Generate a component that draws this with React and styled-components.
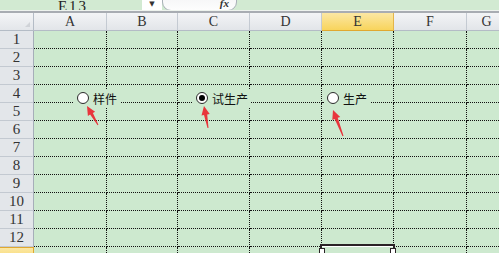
import React from 'react';
import styled, { createGlobalStyle, css } from 'styled-components';

const GlobalStyle = createGlobalStyle`
  html, body {
    margin: 0;
    padding: 0;
    background: #cde9cf;
    overflow: hidden;
  }
  * { box-sizing: border-box; }
`;

const COLS = ['A', 'B', 'C', 'D', 'E', 'F', 'G'];
const COL_WIDTHS = [73, 71, 72, 72, 72, 73, 40];
const ROW_COUNT = 13;
const SELECTED_COL = 'E';
const SELECTED_ROW = 13;

const StyledPage = styled.div`
  width: 499px;
  height: 253px;
  overflow: hidden;
  display: flex;
  flex-direction: column;
  font-family: "Liberation Serif", "DejaVu Serif", serif;
`;

const StyledFormulaBar = styled.div`
  height: 10px;
  flex-shrink: 0;
  display: flex;
  align-items: flex-end;
  background: #d2ead2;
  overflow: hidden;
`;

const StyledNameBox = styled.div`
  width: 142px;
  height: 20px;
  flex-shrink: 0;
  display: flex;
  align-items: center;
  justify-content: center;
  padding-left: 4px;
  margin-bottom: -6px;
  font-family: "Liberation Serif", serif;
  font-size: 15px;
  letter-spacing: 2px;
  color: #222;
`;

const StyledDropdown = styled.div`
  width: 20px;
  height: 10px;
  flex-shrink: 0;
  background: #fff;
  display: flex;
  align-items: center;
  justify-content: center;
  font-family: "DejaVu Sans", sans-serif;
  font-size: 7px;
  color: #333;
  padding-bottom: 3px;
`;

const StyledFxBox = styled.div`
  width: 75px;
  height: 20px;
  flex-shrink: 0;
  margin-bottom: -1px;
  border: 1px solid #a9b0b8;
  border-radius: 9px;
  background: linear-gradient(#f2f3f4, #fdfdfd);
  display: flex;
  align-items: flex-end;
  justify-content: flex-end;
  padding: 0 7px 1px 0;
  font-family: "Liberation Serif", serif;
  font-style: italic;
  font-weight: bold;
  font-size: 11px;
  color: #333;
`;

const StyledSeparator = styled.div`
  height: 3px;
  flex-shrink: 0;
  background: #eef3ee;
  border-bottom: 2px solid #a8acb2;
`;

const StyledSheet = styled.div`
  position: relative;
  flex: 1;
  min-height: 0;
  display: grid;
  grid-template-columns: 34px ${COL_WIDTHS.map((w) => `${w}px`).join(' ')};
  grid-auto-rows: 18px;
  align-content: start;
`;

const headerBase = css`
  display: flex;
  align-items: center;
  justify-content: center;
  font-size: 14px;
  color: #333;
`;

const StyledCorner = styled.div`
  position: relative;
  background: linear-gradient(#f4f5f7, #e3e6ea);
  border-right: 1px solid #b4bcc6;
  border-bottom: 1px solid #b4bcc6;

  &::after {
    content: '';
    position: absolute;
    right: 3px;
    bottom: 3px;
    border-left: 5px solid transparent;
    border-bottom: 5px solid #d0d3d8;
  }
`;

const StyledColHeader = styled.div`
  ${headerBase};
  background: ${({ $active }) =>
    $active ? 'linear-gradient(#fbe7a4, #f8d45c)' : 'linear-gradient(#f3f4f6, #e2e5e9)'};
  border-right: 1px solid ${({ $active }) => ($active ? '#e3b54a' : '#c4cad2')};
  border-bottom: 1px solid ${({ $active }) => ($active ? '#e0a830' : '#b4bcc6')};
`;

const StyledRowHeader = styled.div`
  ${headerBase};
  font-size: 15px;
  background: ${({ $active }) => ($active ? 'linear-gradient(#fbe7a4, #f8d45c)' : '#e3e6ea')};
  border-right: 1px solid ${({ $active }) => ($active ? '#e0a830' : '#a6aeb9')};
  border-bottom: 1px solid ${({ $active }) => ($active ? '#e0a830' : '#c3c9d1')};
  border-top: ${({ $active }) => ($active ? '1px solid #e0a830' : 'none')};
`;

const StyledCell = styled.div`
  position: relative;
  border-right: 1px dotted #111;
  border-bottom: 1px dotted #111;
`;

const StyledSelection = styled.div`
  position: absolute;
  left: -2px;
  right: -2px;
  top: -3px;
  height: 8px;
  border: 2px solid #2a2226;
  border-bottom: none;
  box-shadow: inset 0 1px 0 #fff;

  &::before,
  &::after {
    content: '';
    position: absolute;
    top: 2px;
    width: 4px;
    height: 5px;
    border: 1px solid #2a2226;
    background: #fff;
  }
  &::before { left: -3px; }
  &::after { right: -3px; }
`;

const StyledOption = styled.label`
  position: absolute;
  display: flex;
  align-items: center;
  gap: 4px;
  height: 18px;
  padding: 0 3px;
  background: #cde9cf;
  font-family: "Noto Sans CJK SC", sans-serif;
  font-size: 12px;
  color: #111;
`;

const StyledRadio = styled.span`
  width: 12px;
  height: 12px;
  flex-shrink: 0;
  border-radius: 50%;
  border: 1px solid #2b2b2b;
  background: #fff;
  display: flex;
  align-items: center;
  justify-content: center;

  &::after {
    content: '';
    width: 6px;
    height: 6px;
    border-radius: 50%;
    background: ${({ $checked }) => ($checked ? '#000' : 'transparent')};
  }
`;

const StyledArrows = styled.svg`
  position: absolute;
  left: 0;
  top: -13px;
  width: 499px;
  height: 253px;
  pointer-events: none;
`;

const options = [
  { label: '样件', x: 74, checked: false },
  { label: '试生产', x: 193, checked: true },
  { label: '生产', x: 324, checked: false },
];

const arrows = [
  { tail: [98, 125], head: [87, 106] },
  { tail: [208, 128], head: [204, 106] },
  { tail: [343, 136], head: [333, 110] },
];

const arrowPoints = ({ tail, head }) => {
  const [tx, ty] = tail;
  const [hx, hy] = head;
  const len = Math.hypot(hx - tx, hy - ty);
  const dx = (hx - tx) / len;
  const dy = (hy - ty) / len;
  const nx = -dy;
  const ny = dx;
  const neckX = hx - dx * 9;
  const neckY = hy - dy * 9;
  const p = (x, y) => `${x.toFixed(1)},${y.toFixed(1)}`;
  return [
    p(tx + nx * 0.5, ty + ny * 0.5),
    p(neckX + nx * 1.6, neckY + ny * 1.6),
    p(neckX + nx * 4.2, neckY + ny * 4.2),
    p(hx, hy),
    p(neckX - nx * 4.2, neckY - ny * 4.2),
    p(neckX - nx * 1.6, neckY - ny * 1.6),
    p(tx - nx * 0.5, ty - ny * 0.5),
  ].join(' ');
};

const App = () => {
  const rows = Array.from({ length: ROW_COUNT }, (_, i) => i + 1);

  return (
    <StyledPage>
      <GlobalStyle />
      <StyledFormulaBar>
        <StyledNameBox>E13</StyledNameBox>
        <StyledDropdown>▼</StyledDropdown>
        <StyledFxBox>fx</StyledFxBox>
      </StyledFormulaBar>
      <StyledSeparator />
      <StyledSheet>
        <StyledCorner />
        {COLS.map((c) => (
          <StyledColHeader key={c} $active={c === SELECTED_COL}>
            {c}
          </StyledColHeader>
        ))}
        {rows.map((r) => (
          <React.Fragment key={r}>
            <StyledRowHeader $active={r === SELECTED_ROW}>
              {r === SELECTED_ROW ? '' : r}
            </StyledRowHeader>
            {COLS.map((c) => (
              <StyledCell key={c}>
                {r === SELECTED_ROW && c === SELECTED_COL && <StyledSelection />}
              </StyledCell>
            ))}
          </React.Fragment>
        ))}

        {options.map((o) => (
          <StyledOption key={o.label} style={{ left: o.x, top: 76 }}>
            <StyledRadio $checked={o.checked} />
            {o.label}
          </StyledOption>
        ))}

        <StyledArrows viewBox="0 0 499 253">
          {arrows.map((a, i) => (
            <polygon key={i} points={arrowPoints(a)} fill="#e8363c" />
          ))}
        </StyledArrows>
      </StyledSheet>
    </StyledPage>
  );
};

export default App;
